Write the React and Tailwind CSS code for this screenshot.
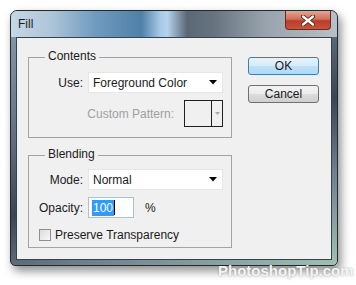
import React from 'react';

function DropArrow({ color = '#000' }) {
  return (
    <svg width="8" height="5" viewBox="0 0 8 5">
      <path d="M0 0 H8 L4 4.5 Z" fill={color} />
    </svg>
  );
}

function Select({ value }) {
  return (
    <div className="ml-[5px] flex h-[21px] w-[135px] items-center justify-between border border-[#e6e6e6] bg-white pl-[4px] pr-[5px] text-[12px] text-[#1a1a1a]">
      <span>{value}</span>
      <DropArrow />
    </div>
  );
}

function Group({ title, className, children }) {
  return (
    <div className={`relative w-[204px] border border-[#a3a3a3] ${className}`}>
      <span className="absolute left-[16px] top-[-9px] bg-[#f0f0f0] px-[3px] text-[12px] leading-[15px] text-[#1a1a1a]">
        {title}
      </span>
      {children}
    </div>
  );
}

export default function App() {
  return (
    <div className="relative h-[285px] w-[356px] overflow-hidden bg-white pl-[10px] pt-[10px] font-['Liberation_Sans',Arial,sans-serif]">
      <div className="flex h-[256px] w-[328px] flex-col rounded-b-[5px] rounded-t-[7px] border border-[#25292d] bg-[linear-gradient(160deg,#8d9fae_0%,#5f6f7d_35%,#3a4653_55%,#6f808e_75%,#9fc2b2_100%)] shadow-[3px_5px_10px_rgba(0,0,0,0.45)]">
        {/* title bar */}
        <div className="flex h-[26px] items-start justify-between rounded-t-[6px] bg-[linear-gradient(90deg,#c6d7e5_0%,#afc6d9_12%,#6f9bbf_26%,#4f80a8_40%,#a8cceb_46%,#b4d2ec_48%,#5a6875_54%,#66737f_62%,#98a3ad_78%,#b7c0c8_100%)]">
          <span className="pl-[7px] pt-[6px] text-[12px] leading-[14px] text-[#1c1c1c]">Fill</span>
          <div className="mr-[6px] flex h-[19px] w-[46px] items-center justify-center rounded-b-[4px] border border-t-0 border-[#6b2a1f] bg-[linear-gradient(180deg,#e7a596_0%,#d0705c_45%,#bb3c26_55%,#c8533c_100%)]">
            <svg width="14" height="11" viewBox="0 0 14 11">
              <path d="M2 1.5 L12 9.5 M12 1.5 L2 9.5" stroke="#4a1a12" strokeWidth="4" strokeLinecap="round" />
              <path d="M2 1.5 L12 9.5 M12 1.5 L2 9.5" stroke="#ffffff" strokeWidth="2.4" strokeLinecap="round" />
            </svg>
          </div>
        </div>

        {/* client area */}
        <div className="mx-[5px] mb-[5px] flex flex-1 border border-[#36424d] bg-[#f0f0f0] pl-[11px] pt-[19px] text-[12px] text-[#1a1a1a]">
          <div className="flex flex-col gap-[17px]">
            <Group title="Contents" className="h-[81px] pt-[14px]">
              <div className="flex items-center">
                <span className="w-[54px] text-right">Use:</span>
                <Select value="Foreground Color" />
              </div>
              <div className="mt-[7px] flex items-center justify-end pr-[8px]">
                <span className="text-[#a0a0a0]">Custom Pattern:</span>
                <div className="ml-[10px] flex h-[27px] w-[39px] border border-[#1f1f1f]">
                  <div className="w-[27px] border-r border-[#1f1f1f]" />
                  <div className="flex flex-1 items-center justify-center">
                    <svg width="5" height="3" viewBox="0 0 5 3">
                      <path d="M0 0 H5 L2.5 3 Z" fill="#a8a8a8" />
                    </svg>
                  </div>
                </div>
              </div>
            </Group>

            <Group title="Blending" className="h-[93px] pt-[13px]">
              <div className="flex items-center">
                <span className="w-[54px] text-right">Mode:</span>
                <Select value="Normal" />
              </div>
              <div className="mt-[7px] flex items-center">
                <span className="w-[54px] text-right">Opacity:</span>
                <div className="ml-[5px] flex h-[21px] w-[46px] items-center border border-[#abc0d5] bg-white pl-[3px]">
                  <span className="bg-[#3399ff] px-[1px] leading-[16px] text-white">100</span>
                  <span className="h-[15px] w-px bg-black" />
                </div>
                <span className="ml-[11px]">%</span>
              </div>
              <div className="mt-[8px] flex items-center pl-[10px]">
                <div className="h-[12px] w-[12px] border border-[#8f8f8f] bg-[linear-gradient(135deg,#dcdcdc,#f8f8f8)]" />
                <span className="ml-[4px]">Preserve Transparency</span>
              </div>
            </Group>
          </div>

          <div className="ml-[16px] flex w-[71px] flex-col gap-[10px]">
            <button className="flex h-[18px] items-center justify-center rounded-[3px] border border-[#3c7fb1] bg-[linear-gradient(180deg,#e6f3fc_0%,#d6ebfa_50%,#bfe0f7_51%,#b3d9f4_100%)] text-[12px] text-[#1a1a1a]">
              OK
            </button>
            <button className="flex h-[18px] items-center justify-center rounded-[3px] border border-[#707070] bg-[linear-gradient(180deg,#f4f4f4_0%,#ebebeb_50%,#dddddd_51%,#cfcfcf_100%)] text-[12px] text-[#1a1a1a]">
              Cancel
            </button>
          </div>
        </div>
      </div>

      <span className="absolute left-[218px] top-[262px] text-[15px] font-bold leading-[18px] text-[#f4f4f4] [text-shadow:0_0_2px_rgba(0,0,0,0.35)]">
        PhotoshopTip.com
      </span>
    </div>
  );
}
